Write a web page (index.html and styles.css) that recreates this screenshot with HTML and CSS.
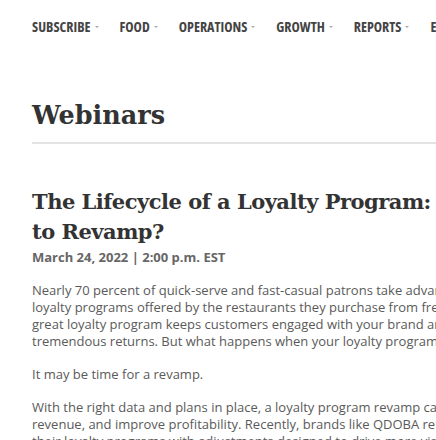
FILE: index.html
```html
<!DOCTYPE html>
<html lang="en">
<head>
<meta charset="utf-8">
<title>Webinars</title>
<link rel="stylesheet" href="styles.css">
</head>
<body>
<div class="page">
  <nav class="nav">
    <span class="nav-item">SUBSCRIBE<span class="caret"></span></span>
    <span class="nav-item">FOOD<span class="caret"></span></span>
    <span class="nav-item">OPERATIONS<span class="caret"></span></span>
    <span class="nav-item">GROWTH<span class="caret"></span></span>
    <span class="nav-item">REPORTS<span class="caret"></span></span>
    <span class="nav-item">EVENTS<span class="caret"></span></span>
  </nav>
  <main class="content">
    <h1 class="page-title">Webinars</h1>
    <article class="webinar">
      <h2 class="webinar-title">The Lifecycle of a Loyalty Program: Is It Time to Revamp?</h2>
      <p class="webinar-date">March 24, 2022 | 2:00 p.m. EST</p>
      <p class="body">Nearly 70 percent of quick-serve and fast-casual patrons take advantage of the loyalty programs offered by the restaurants they purchase from frequently. A great loyalty program keeps customers engaged with your brand and delivers tremendous returns. But what happens when your loyalty program stalls?</p>
      <p class="body">It may be time for a revamp.</p>
      <p class="body">With the right data and plans in place, a loyalty program revamp can increase revenue, and improve profitability. Recently, brands like QDOBA reinvigorated their loyalty programs with adjustments designed to drive more visits.</p>
    </article>
  </main>
</div>
</body>
</html>
```
FILE: styles.css
```css
html, body {
  margin: 0;
  padding: 0;
  background: #fff;
  overflow: hidden;
}
.page {
  width: 760px;
  padding-left: 32px;
}
.nav {
  display: flex;
  align-items: center;
  height: 52px;
  font-family: "Open Sans", sans-serif;
  font-stretch: 85%;
  font-weight: 700;
  font-size: 14px;
  color: #444;
  white-space: nowrap;
}
.nav-item {
  display: inline-flex;
  align-items: center;
  margin-right: 21px;
}
.caret {
  display: inline-block;
  width: 0;
  height: 0;
  border-left: 2.5px solid transparent;
  border-right: 2.5px solid transparent;
  border-top: 2px solid #aaa;
  margin-left: 4px;
  margin-top: 1px;
}
.content {
  width: 780px;
}
.page-title {
  font-family: "DejaVu Serif", serif;
  font-weight: 700;
  font-size: 25.5px;
  color: #333;
  margin: 45px 0 0;
  line-height: 36px;
  padding-bottom: 9px;
  border-bottom: 2px solid #e3e3e3;
}
.webinar-title {
  font-family: "DejaVu Serif", serif;
  font-weight: 700;
  font-size: 21px;
  letter-spacing: -0.5px;
  line-height: 30px;
  color: #333;
  margin: 43px 0 0;
  width: 525px;
}
.webinar-date {
  font-family: "Open Sans", sans-serif;
  font-weight: 700;
  font-size: 13px;
  color: #666;
  margin: 1px 0 0;
  line-height: 18px;
}
.body {
  font-family: "Open Sans", sans-serif;
  font-size: 13px;
  line-height: 17px;
  color: #5a5a5a;
  margin: 16px 0 0;
  width: 500px;
}
```
